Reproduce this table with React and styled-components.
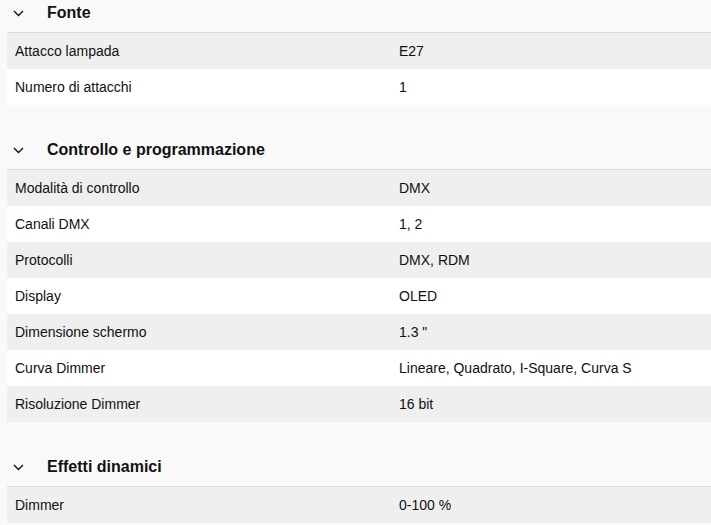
import React from 'react';
import styled, { createGlobalStyle } from 'styled-components';

const GlobalStyle = createGlobalStyle`
  html, body {
    margin: 0;
    padding: 0;
    background: #f9f9f9;
    font-family: 'Liberation Sans', Arial, Helvetica, sans-serif;
    color: #111;
  }
`;

const Page = styled.div`
  margin-top: -8px;
  padding-left: 7px;
`;

const Section = styled.section`
  & + & {
    margin-top: 24px;
  }
`;

const Header = styled.div`
  height: 38px;
  padding: 2px 0 0 6px;
  display: flex;
  align-items: center;
  gap: 23px;
  font-size: 16px;
  font-weight: 700;
  border-bottom: 1px solid #dcdcdc;
`;

const Chevron = styled.svg`
  width: 11px;
  height: 7px;
  margin-top: 1px;
`;

const Row = styled.div`
  display: grid;
  grid-template-columns: 384px 1fr;
  align-items: center;
  height: 36px;
  padding-left: 8px;
  font-size: 14px;
  background: ${({ $odd }) => ($odd ? '#efefef' : '#ffffff')};
`;

const sections = [
  {
    title: 'Fonte',
    rows: [
      ['Attacco lampada', 'E27'],
      ['Numero di attacchi', '1'],
    ],
  },
  {
    title: 'Controllo e programmazione',
    rows: [
      ['Modalità di controllo', 'DMX'],
      ['Canali DMX', '1, 2'],
      ['Protocolli', 'DMX, RDM'],
      ['Display', 'OLED'],
      ['Dimensione schermo', '1.3 "'],
      ['Curva Dimmer', 'Lineare, Quadrato, I-Square, Curva S'],
      ['Risoluzione Dimmer', '16 bit'],
    ],
  },
  {
    title: 'Effetti dinamici',
    rows: [['Dimmer', '0-100 %']],
  },
];

export default function App() {
  return (
    <>
      <GlobalStyle />
      <Page>
        {sections.map((s) => (
          <Section key={s.title}>
            <Header>
              <Chevron viewBox="0 0 11 7">
                <polyline
                  points="1,1 5.5,5.5 10,1"
                  fill="none"
                  stroke="#111"
                  strokeWidth="1.4"
                />
              </Chevron>
              {s.title}
            </Header>
            {s.rows.map(([label, value], i) => (
              <Row key={label} $odd={i % 2 === 0}>
                <span>{label}</span>
                <span>{value}</span>
              </Row>
            ))}
          </Section>
        ))}
      </Page>
    </>
  );
}
